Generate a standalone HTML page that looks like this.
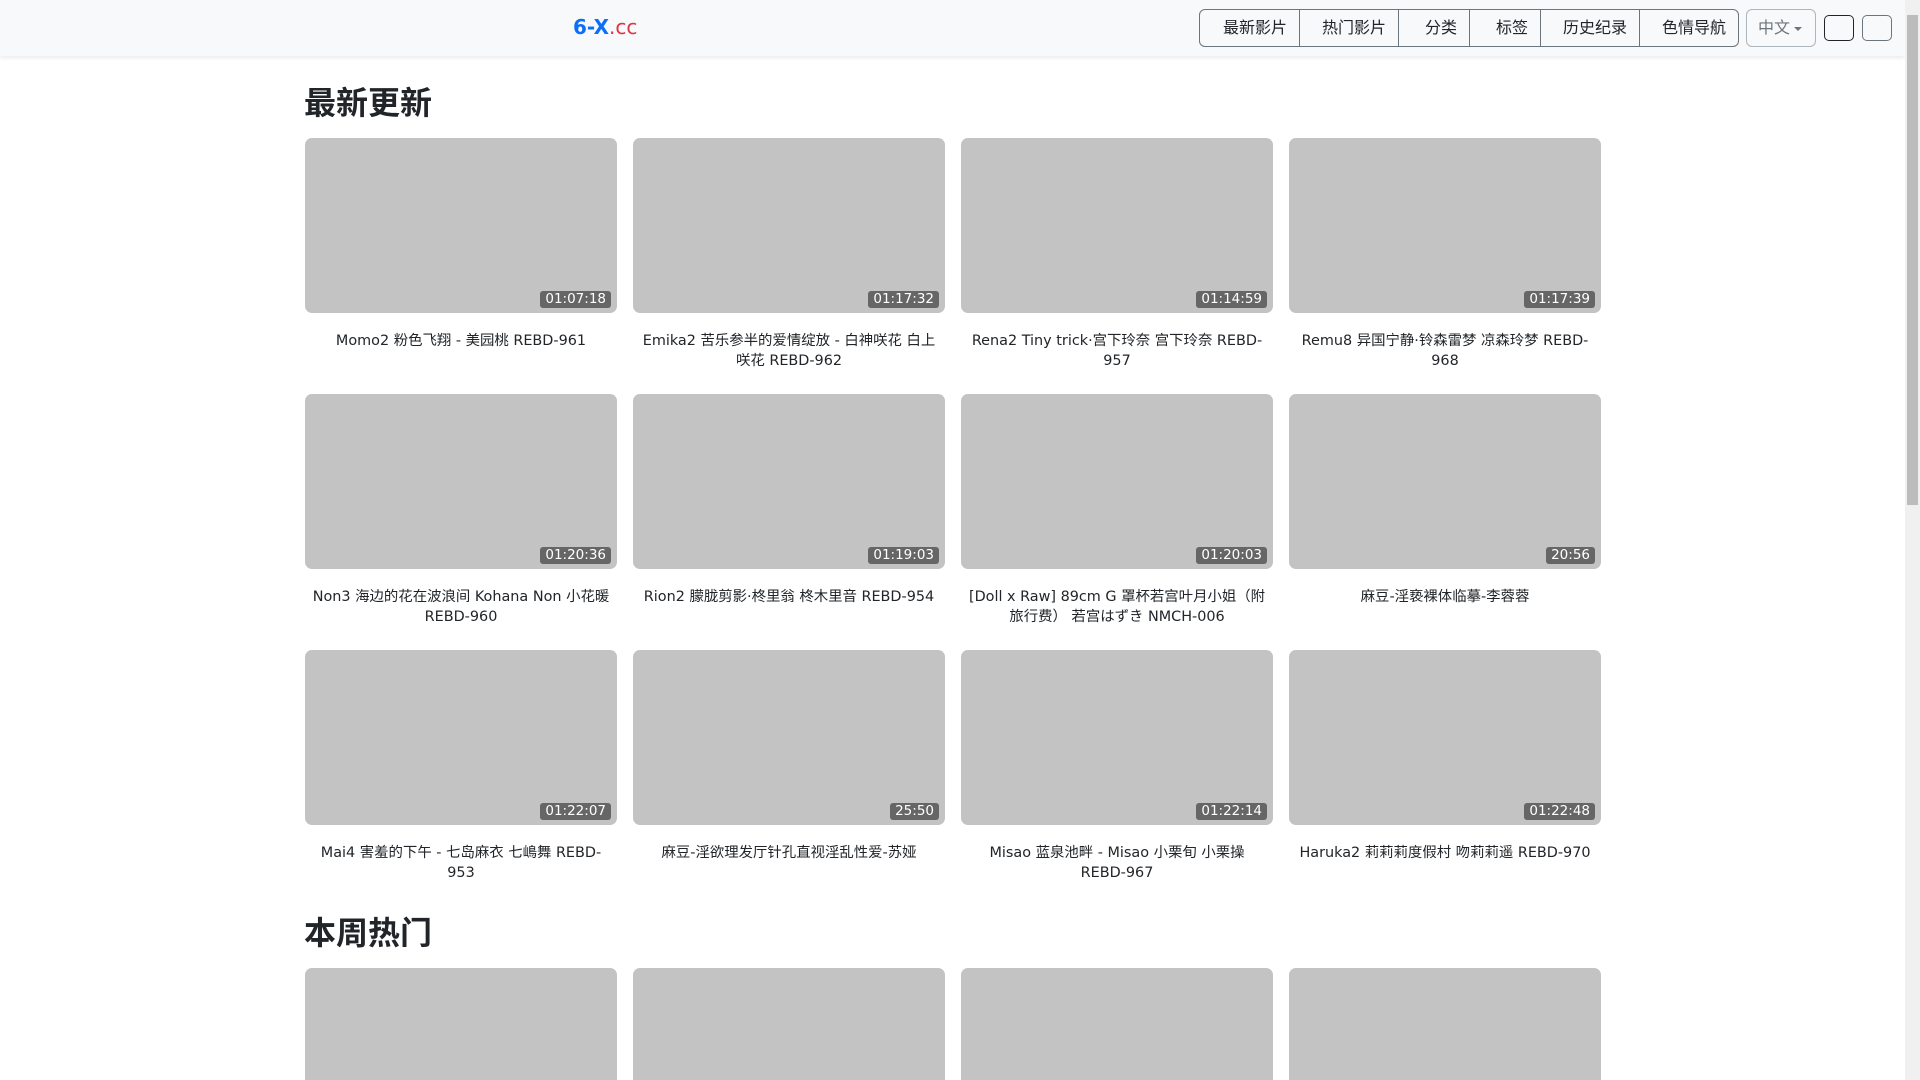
<!DOCTYPE html>
<html><head><meta charset="utf-8"><style>
*{box-sizing:border-box;margin:0;padding:0}
html,body{width:1920px;height:1080px;overflow:hidden;background:#fff;font-family:"DejaVu Sans","Liberation Sans","Noto Sans CJK SC",sans-serif;color:#212529;position:relative}
.hdr{position:absolute;left:0;top:0;width:1905px;height:56px;background:#f8f9fa;box-shadow:0 2px 4px rgba(0,0,0,.08)}
.logo{position:absolute;left:573px;top:15px;font-size:20px;font-weight:bold;color:#0d6efd}
.logo span{color:#dc3545;font-weight:normal}
.grp{position:absolute;left:1199px;top:9px;height:38px;display:flex;border:1px solid #6c757d;border-radius:6px;overflow:hidden}
.grp div{height:36px;line-height:36px;font-size:16px;text-align:right;padding-right:12px;border-left:1px solid #6c757d;color:#212529}
.grp div:first-child{border-left:none}
.lang{position:absolute;left:1746px;top:9px;width:70px;height:38px;border:1px solid #adb5bd;border-radius:6px;color:#6c757d;font-size:16px;line-height:36px;padding-left:11px}
.lang:after{content:"";position:absolute;right:13px;top:17px;border-left:4px solid transparent;border-right:4px solid transparent;border-top:4px solid #6c757d}
.sq{position:absolute;top:15px;width:30px;height:26px;border-radius:5px}
.sb{position:absolute;left:1905px;top:0;width:15px;height:1080px;background:#f0f0f0}
.sb i{position:absolute;left:2px;top:15px;width:11px;height:490px;background:#bcbcbc}
h2{position:absolute;left:304px;font-size:32px;font-weight:bold;font-family:"Liberation Sans","Noto Sans CJK SC",sans-serif;line-height:40px}
.c{position:absolute;width:312px}
.t{height:175px;background:#c3c3c3;border-radius:7px;position:relative}
.b{position:absolute;right:6px;bottom:5px;height:17px;background:#666;color:#fff;font-size:13.5px;line-height:17px;padding:0 5px;border-radius:3px}
.n{margin-top:18px;text-align:center;font-size:14.4px;line-height:20px;padding:0 6px}
</style></head><body>
<div class="hdr">
<div class="logo">6-X<span>.cc</span></div>
<div class="grp">
<div style="width:99px">最新影片</div><div style="width:99px">热门影片</div><div style="width:71px">分类</div><div style="width:71px">标签</div><div style="width:99px">历史纪录</div><div style="width:99px">色情导航</div>
</div>
<div class="lang">中文</div>
<div class="sq" style="left:1824px;border:1px solid #212529"></div>
<div class="sq" style="left:1862px;border:1px solid #6c757d"></div>
</div>
<div class="sb"><i></i></div>
<h2 style="top:83px">最新更新</h2>
<h2 style="top:913px">本周热门</h2>

<div class="c" style="left:305px;top:138px"><div class="t"><span class="b">01:07:18</span></div><div class="n">Momo2 粉色飞翔 - 美园桃 REBD-961</div></div>
<div class="c" style="left:633px;top:138px"><div class="t"><span class="b">01:17:32</span></div><div class="n">Emika2 苦乐参半的爱情绽放 - 白神咲花 白上咲花 REBD-962</div></div>
<div class="c" style="left:961px;top:138px"><div class="t"><span class="b">01:14:59</span></div><div class="n">Rena2 Tiny trick·宫下玲奈 宫下玲奈 REBD-957</div></div>
<div class="c" style="left:1289px;top:138px"><div class="t"><span class="b">01:17:39</span></div><div class="n">Remu8 异国宁静·铃森雷梦 凉森玲梦 REBD-968</div></div>

<div class="c" style="left:305px;top:394px"><div class="t"><span class="b">01:20:36</span></div><div class="n">Non3 海边的花在波浪间 Kohana Non 小花暖 REBD-960</div></div>
<div class="c" style="left:633px;top:394px"><div class="t"><span class="b">01:19:03</span></div><div class="n">Rion2 朦胧剪影·柊里翁 柊木里音 REBD-954</div></div>
<div class="c" style="left:961px;top:394px"><div class="t"><span class="b">01:20:03</span></div><div class="n">[Doll x Raw] 89cm G 罩杯若宫叶月小姐（附旅行费） 若宫はずき NMCH-006</div></div>
<div class="c" style="left:1289px;top:394px"><div class="t"><span class="b">20:56</span></div><div class="n">麻豆-淫亵裸体临摹-李蓉蓉</div></div>

<div class="c" style="left:305px;top:650px"><div class="t"><span class="b">01:22:07</span></div><div class="n">Mai4 害羞的下午 - 七岛麻衣 七嶋舞 REBD-953</div></div>
<div class="c" style="left:633px;top:650px"><div class="t"><span class="b">25:50</span></div><div class="n">麻豆-淫欲理发厅针孔直视淫乱性爱-苏娅</div></div>
<div class="c" style="left:961px;top:650px"><div class="t"><span class="b">01:22:14</span></div><div class="n">Misao 蓝泉池畔 - Misao 小栗旬 小栗操 REBD-967</div></div>
<div class="c" style="left:1289px;top:650px"><div class="t"><span class="b">01:22:48</span></div><div class="n">Haruka2 莉莉莉度假村 吻莉莉遥 REBD-970</div></div>

<div class="c" style="left:305px;top:968px"><div class="t" style="height:112px;border-radius:7px 7px 0 0"></div></div>
<div class="c" style="left:633px;top:968px"><div class="t" style="height:112px;border-radius:7px 7px 0 0"></div></div>
<div class="c" style="left:961px;top:968px"><div class="t" style="height:112px;border-radius:7px 7px 0 0"></div></div>
<div class="c" style="left:1289px;top:968px"><div class="t" style="height:112px;border-radius:7px 7px 0 0"></div></div>
</body></html>
